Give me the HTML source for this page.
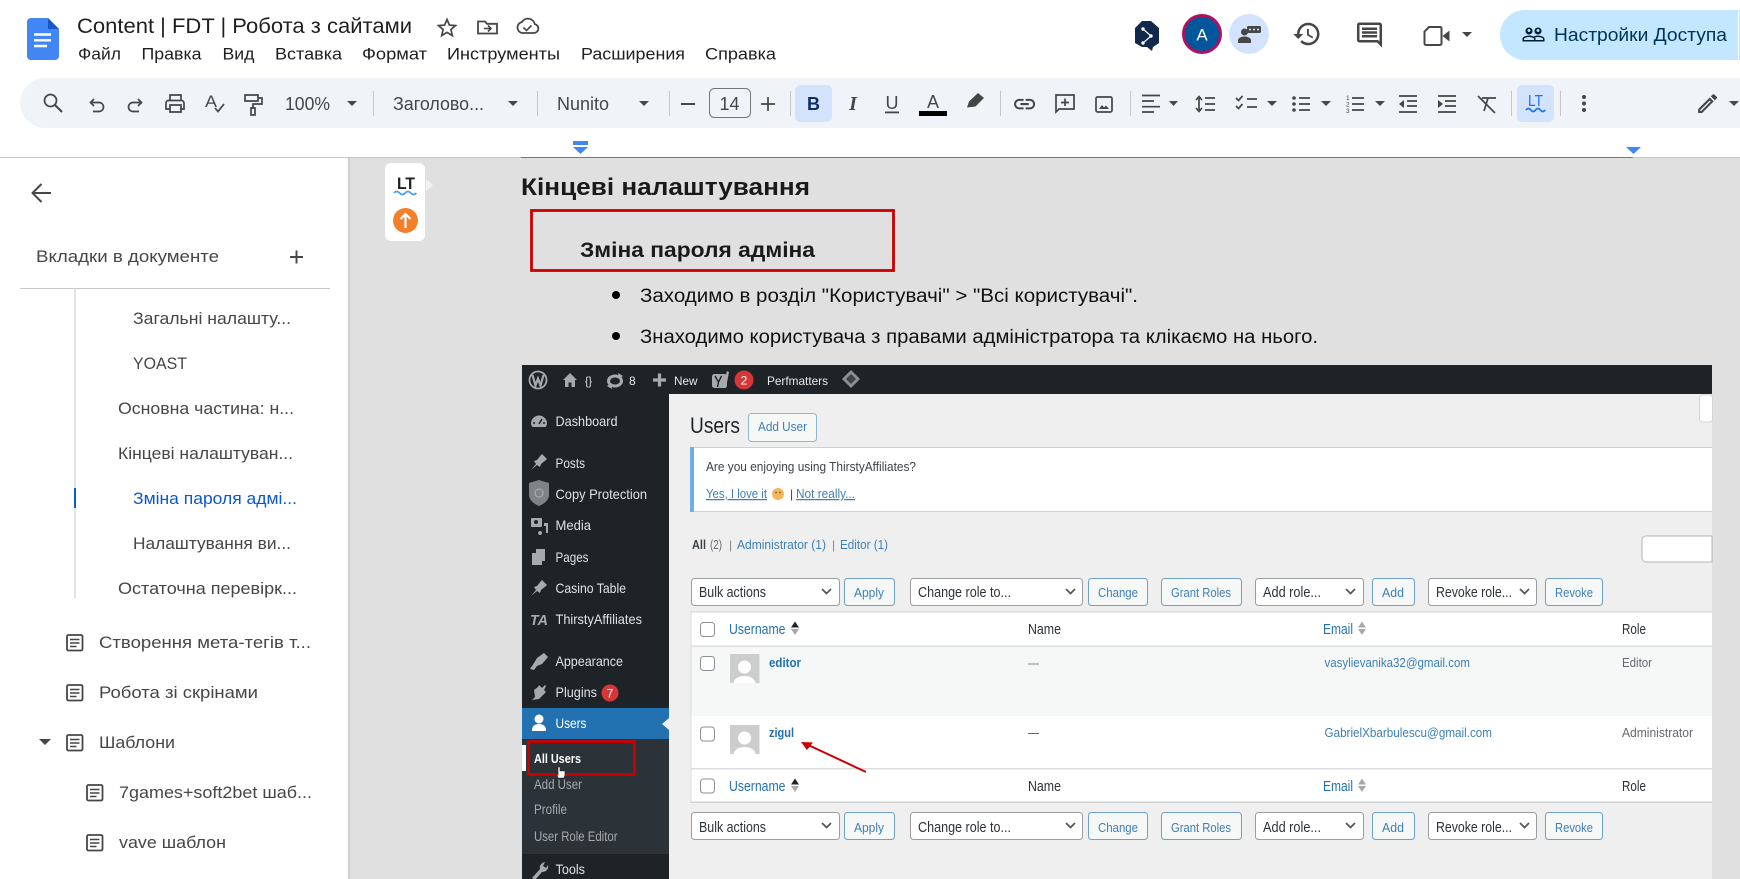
<!DOCTYPE html>
<html><head><meta charset="utf-8"><title>Content | FDT | Робота з сайтами</title>
<style>
html,body{margin:0;padding:0;width:1740px;height:879px;overflow:hidden;background:#fff}
svg{display:block;font-family:"Liberation Sans",sans-serif}
.t{font-size:21.5px;fill:#1f1f1f}
.m{font-size:16.5px;fill:#1f1f1f}
.tb{font-size:18px;fill:#444746}
.s{font-size:16.5px;fill:#444746}
.d{font-size:19px;fill:#111}
.wm{font-size:14px;fill:#dfe1e3}
.ws{font-size:13.5px;fill:#a7aaad}
.wb{font-size:12px;fill:#e6e7e8}
.sel{font-size:14.5px;fill:#2c3338}
.btn{font-size:13px;fill:#3f7fb5}
.th{font-size:14.5px;fill:#2271b1}
.tn{font-size:14.5px;fill:#2c3338}
.td{font-size:13px;fill:#3a7fb8}
.tr{font-size:13px;fill:#646970}
.ic{fill:#444746}
.st{fill:none;stroke:#444746;stroke-width:1.7}
.wi{fill:#a7aaad}
</style></head><body>
<svg xmlns="http://www.w3.org/2000/svg" width="1740" height="879" viewBox="0 0 1740 879">
<rect width="1740" height="879" fill="#fff"/>

<!-- doc area -->
<rect x="349" y="157" width="1391" height="722" fill="#e0e0e0"/>
<rect x="348" y="157" width="2" height="722" fill="#cfcfcf"/>
<rect x="0" y="157" width="1740" height="1" fill="#c7c7c7"/>
<rect x="521" y="157" width="1112" height="1" fill="#777"/>

<!-- header -->
<path d="M27 22a4 4 0 0 1 4-4h17l11 11v27a4 4 0 0 1-4 4H31a4 4 0 0 1-4-4z" fill="#4285f4"/>
<path d="M48 18l11 11H48z" fill="#1a56c4"/>
<path d="M34 34.5h17M34 40.3h17M34 46h13" stroke="#fff" stroke-width="2.4" fill="none"/>
<text class="t" x="77" y="33" textLength="335" lengthAdjust="spacingAndGlyphs">Content | FDT | Робота з сайтами</text>
<path d="M447 19.5l2.4 5.6 6.1.5-4.6 4 1.4 6-5.3-3.2-5.3 3.2 1.4-6-4.6-4 6.1-.5z" fill="none" stroke="#444746" stroke-width="1.7"/>
<path d="M478 21.5h7l2 2.3h10v9.7h-19z" fill="none" stroke="#444746" stroke-width="1.8"/>
<path d="M484 28.5h7M488 25.5l3 3-3 3" fill="none" stroke="#444746" stroke-width="1.6"/>
<path d="M522 33h12a4.5 4.5 0 0 0 .8-8.9A7 7 0 0 0 522 22a5.6 5.6 0 0 0 0 11z" fill="none" stroke="#444746" stroke-width="1.8"/>
<path d="M523.5 27.5l3 3 5-5" fill="none" stroke="#444746" stroke-width="1.6"/>

<text class="m" x="78" y="59.5" textLength="43" lengthAdjust="spacingAndGlyphs">Файл</text>
<text class="m" x="141.5" y="59.5" textLength="60" lengthAdjust="spacingAndGlyphs">Правка</text>
<text class="m" x="222.5" y="59.5" textLength="32" lengthAdjust="spacingAndGlyphs">Вид</text>
<text class="m" x="275" y="59.5" textLength="67" lengthAdjust="spacingAndGlyphs">Вставка</text>
<text class="m" x="362" y="59.5" textLength="65" lengthAdjust="spacingAndGlyphs">Формат</text>
<text class="m" x="447" y="59.5" textLength="113" lengthAdjust="spacingAndGlyphs">Инструменты</text>
<text class="m" x="581" y="59.5" textLength="104" lengthAdjust="spacingAndGlyphs">Расширения</text>
<text class="m" x="705" y="59.5" textLength="71" lengthAdjust="spacingAndGlyphs">Справка</text>

<!-- right header -->
<path d="M1142 21h9l8 7v15l-6 4-1 4-5-4h-5l-7-4V28z" fill="#12294b"/>
<path d="M1143 29l8 7-8 7" fill="none" stroke="#fff" stroke-width="1.2"/>
<circle cx="1143" cy="29" r="1.7" fill="#fff"/><circle cx="1151" cy="36" r="1.7" fill="#fff"/><circle cx="1143" cy="43" r="1.7" fill="#fff"/>
<circle cx="1202" cy="34" r="18.5" fill="#01579b" stroke="#b0115e" stroke-width="3"/>
<text x="1202" y="40.5" text-anchor="middle" font-size="17" fill="#fff">A</text>
<circle cx="1249" cy="34" r="20" fill="#d3e3fd"/>
<circle cx="1244.5" cy="32" r="3.5" fill="#444746"/>
<path d="M1238 43v-2.5c0-2.5 3-4 6.5-4s6.5 1.5 6.5 4V43z" fill="#444746"/>
<rect x="1247" y="26" width="14" height="7" rx="1.5" fill="#444746"/>
<path d="M1249 29.5h2M1253 29.5h2M1257 29.5h2" stroke="#d3e3fd" stroke-width="1.5"/>
<path transform="translate(1292,19) scale(1.25)" class="ic" d="M13 3c-4.97 0-9 4.03-9 9H1l3.89 3.89.07.14L9 12H6c0-3.87 3.13-7 7-7s7 3.13 7 7-3.13 7-7 7c-1.93 0-3.68-.79-4.94-2.06l-1.42 1.42C8.27 19.99 10.51 21 13 21c4.97 0 9-4.03 9-9s-4.03-9-9-9zm-1 5v5l4.28 2.54.72-1.21-3.5-2.08V8H12z"/>
<path transform="translate(1354.5,20) scale(1.25)" class="ic" d="M22 4c0-1.1-.9-2-2-2H4c-1.1 0-2 .9-2 2v12c0 1.1.9 2 2 2h14l4 4V4zm-2 13.17L18.83 16H4V4h16v13.17zM6 12h12v2H6zm0-3h12v2H6zm0-3h12v2H6z"/>
<path d="M1429 27h11a1.500 1.500 0 0 1 1.500 1.500v15a1.500 1.500 0 0 1-1.500 1.500h-14a1.500 1.500 0 0 1-1.500-1.500V31.500z" fill="none" stroke="#444746" stroke-width="2"/>
<path d="M1442.500 36l7-5.500v11z" class="ic"/>
<polygon points="1462,32 1472,32 1467,37" class="ic"/>
<path d="M1525 10h215v50h-215a25 25 0 0 1 0-50z" fill="#c2e7ff"/>
<rect x="1738" y="10" width="1" height="50" fill="#fff"/>
<path transform="translate(1521.5,22.5)" fill="#001d35" d="M16.5 13c-1.2 0-3.07.34-4.5 1-1.43-.67-3.3-1-4.5-1C5.33 13 1 14.08 1 16.25V19h22v-2.75c0-2.17-4.33-3.25-6.5-3.25zm-4 4.5h-10v-1.25c0-.54 2.56-1.75 5-1.75s5 1.21 5 1.75v1.25zm9 0H14v-1.25c0-.46-.2-.86-.52-1.22.88-.3 1.96-.53 3.02-.53 2.44 0 5 1.21 5 1.75v1.25zM7.5 12c1.93 0 3.5-1.57 3.5-3.5S9.43 5 7.5 5 4 6.57 4 8.5 5.57 12 7.5 12zm0-5.5c.83 0 1.5.67 1.5 1.5s-.67 1.5-1.5 1.5S6 8.83 6 8s.67-1.5 1.5-1.5zm9 5.5c1.93 0 3.5-1.57 3.5-3.5S18.43 5 16.5 5 13 6.57 13 8.5s1.57 3.5 3.5 3.5zm0-5.5c.83 0 1.5.67 1.5 1.500s-.67 1.5-1.5 1.5S15 8.83 15 8s.67-1.5 1.5-1.5z"/>
<text x="1554" y="41" font-size="18" fill="#003355" textLength="173" lengthAdjust="spacingAndGlyphs">Настройки Доступа</text>

<!-- toolbar -->
<path d="M45 78h1695v50H45a25 25 0 0 1 0-50z" fill="#f0f4f9"/>
<circle cx="50.500" cy="100.500" r="6" fill="none" stroke="#444746" stroke-width="1.700"/>
<path d="M55 105l7 7" stroke="#444746" stroke-width="2"/>
<path class="st" d="M94 99l-3.500 3.500 3.500 3.500M90.500 102.500h8.500a4.500 4.500 0 0 1 0 9h-6"/>
<path class="st" d="M138 99l3.500 3.500-3.500 3.500M141.500 102.500h-8.500a4.500 4.500 0 0 0 0 9h6"/>
<path class="st" d="M170 100v-5h11v5M170 109h-4v-6a2.500 2.500 0 0 1 2.500-2.500h13a2.500 2.500 0 0 1 2.500 2.500v6h-4M170 105h11v7h-11z"/>
<text x="205" y="107" font-size="17" fill="#444746" textLength="12" lengthAdjust="spacingAndGlyphs">A</text>
<path class="st" d="M215 108l3 3.500 6-7.500" stroke-width="1.500"/>
<path class="st" d="M245 95h13v6h-13zM258 98h4v6h-9v4M251 108h4v7h-4z"/>
<text class="tb" x="285" y="110" textLength="45" lengthAdjust="spacingAndGlyphs">100%</text>
<polygon points="347,101 357,101 352,106" class="ic"/>
<rect x="373" y="91" width="1" height="25" fill="#c7c7c7"/>
<text class="tb" x="393" y="110" textLength="91" lengthAdjust="spacingAndGlyphs">Заголово...</text>
<polygon points="508,101 518,101 513,106" class="ic"/>
<rect x="537" y="91" width="1" height="25" fill="#c7c7c7"/>
<text class="tb" x="557" y="110" textLength="52" lengthAdjust="spacingAndGlyphs">Nunito</text>
<polygon points="639,101 649,101 644,106" class="ic"/>
<rect x="669" y="91" width="1" height="25" fill="#c7c7c7"/>
<rect x="681" y="103" width="14" height="2" class="ic"/>
<rect x="709.5" y="88.5" width="41" height="29" rx="5" fill="none" stroke="#747775"/>
<text class="tb" x="729.5" y="110" text-anchor="middle" font-size="16">14</text>
<path d="M761 104h14M768 97v14" class="st" stroke-width="2"/>
<rect x="790" y="91" width="1" height="25" fill="#c7c7c7"/>
<rect x="795" y="85" width="37" height="37" rx="5" fill="#d3e3fd"/>
<text x="813.5" y="110" text-anchor="middle" font-size="18" font-weight="bold" fill="#0b2d5f">B</text>
<text x="853" y="110" text-anchor="middle" font-size="20" font-weight="bold" font-style="italic" fill="#444746" font-family="Liberation Serif">I</text>
<text x="892" y="109" text-anchor="middle" font-size="18" fill="#444746">U</text>
<rect x="885" y="111.5" width="14" height="1.8" fill="#444746"/>
<text x="933" y="108" text-anchor="middle" font-size="18" fill="#444746">A</text>
<rect x="919" y="111" width="28" height="5" fill="#000"/>
<path d="M967 107.500l2-6 9-8.500 6 5-8.500 8.500z" class="ic"/>
<rect x="1000" y="91" width="1" height="25" fill="#c7c7c7"/>
<path transform="translate(1012,91.5) scale(1.05)" class="ic" d="M3.9 12c0-1.71 1.39-3.1 3.1-3.1h4V7H7c-2.76 0-5 2.24-5 5s2.24 5 5 5h4v-1.9H7c-1.71 0-3.1-1.39-3.1-3.1zM8 13h8v-2H8v2zm9-6h-4v1.9h4c1.71 0 3.1 1.39 3.1 3.1s-1.39 3.1-3.1 3.1h-4V17h4c2.76 0 5-2.24 5-5s-2.24-5-5-5z"/>
<path class="st" d="M1056 95h18v14h-15l-3 3zM1065 98.500v7.500M1061 102.500h8"/>
<rect x="1096" y="97" width="16" height="15" rx="1.5" class="st"/>
<path d="M1099 109l3-4 2 2.500 2-2 3 3.500z" class="ic"/>
<rect x="1130" y="91" width="1" height="25" fill="#c7c7c7"/>
<path class="st" d="M1142 95.500h18M1142 101h12M1142 106.700h18M1142 112h12"/>
<polygon points="1169,101 1178,101 1173.5,106" class="ic"/>
<path class="st" d="M1199 97v14M1196 100l3-3.500 3 3.500M1196 108l3 3.500 3-3.500M1205 98h10M1205 104h10M1205 110h10"/>
<path class="st" d="M1236 98l2.500 2.500 4-4.500M1236 106l2.500 2.500 4-4.500M1247 99h10M1247 107h10"/>
<polygon points="1267,101 1277,101 1272,106" class="ic"/>
<circle cx="1294" cy="98" r="1.8" class="ic"/><circle cx="1294" cy="104" r="1.8" class="ic"/><circle cx="1294" cy="110" r="1.8" class="ic"/>
<path class="st" d="M1299 98h11M1299 104h11M1299 110h11"/>
<polygon points="1321,101 1331,101 1326,106" class="ic"/>
<text x="1346" y="100" font-size="6.5" fill="#444746">1</text><text x="1346" y="106.5" font-size="6.5" fill="#444746">2</text><text x="1346" y="113" font-size="6.5" fill="#444746">3</text>
<path class="st" d="M1352 98h12M1352 104h12M1352 110h12"/>
<polygon points="1375,101 1385,101 1380,106" class="ic"/>
<path class="st" d="M1399 96h18M1407 101h10M1407 106h10M1399 112h18"/>
<polygon points="1404,100 1404,108 1399,104" class="ic"/>
<path class="st" d="M1438 96h18M1445 101h11M1445 106h11M1438 112h18"/>
<polygon points="1438,100 1438,108 1443,104" class="ic"/>
<path class="st" d="M1478 96l17 17M1482 98h14M1488 98l-4 13" stroke-width="2"/>
<rect x="1511" y="91" width="1" height="25" fill="#c7c7c7"/>
<rect x="1517" y="85" width="37" height="37" rx="5" fill="#d3e3fd"/>
<text x="1535.500" y="106" text-anchor="middle" font-size="16" fill="#1a73e8" textLength="15" lengthAdjust="spacingAndGlyphs">LT</text>
<path d="M1526 110q2.400-3 4.800 0t4.800 0 4.800 0 4.800 0" fill="none" stroke="#1a73e8" stroke-width="1.700"/>
<rect x="1560" y="91" width="1" height="25" fill="#c7c7c7"/>
<circle cx="1584" cy="97" r="2" class="ic"/><circle cx="1584" cy="103.5" r="2" class="ic"/><circle cx="1584" cy="110" r="2" class="ic"/>
<path transform="translate(1695,91) scale(1.05)" class="ic" d="M3 17.25V21h3.75L17.81 9.94l-3.75-3.75L3 17.25zM5.92 19H5v-.92l9.06-9.06.92.92L5.92 19zM20.71 5.63l-2.34-2.34c-.39-.39-1.02-.39-1.41 0l-1.83 1.83 3.75 3.75 1.83-1.83c.39-.39.39-1.02 0-1.41z"/>
<polygon points="1729,101 1739,101 1734,106" class="ic"/>

<!-- ruler markers -->
<rect x="573" y="141" width="15" height="4" fill="#4285f4"/>
<polygon points="573,147 588,147 580.5,154" fill="#4285f4"/>
<polygon points="1626,147 1641,147 1633.5,154" fill="#4285f4"/>

<!-- sidebar -->
<path d="M51 193H34M41.5 184l-9 9 9 9" fill="none" stroke="#444746" stroke-width="2"/>
<text class="s" x="36" y="262" textLength="183" lengthAdjust="spacingAndGlyphs">Вкладки в документе</text>
<path d="M290 257h13M296.5 250.5v13" fill="none" stroke="#444746" stroke-width="1.9"/>
<rect x="20" y="288" width="310" height="1" fill="#c7c7c7"/>
<rect x="74" y="289" width="2" height="309" fill="#e3e3e3"/>
<rect x="74" y="488" width="2" height="20" fill="#0b57d0"/>
<text class="s" x="133" y="324" textLength="158" lengthAdjust="spacingAndGlyphs">Загальні налашту...</text>
<text class="s" x="133" y="369" textLength="54" lengthAdjust="spacingAndGlyphs">YOAST</text>
<text class="s" x="118" y="414" textLength="176" lengthAdjust="spacingAndGlyphs">Основна частина: н...</text>
<text class="s" x="118" y="459" textLength="175" lengthAdjust="spacingAndGlyphs">Кінцеві налаштуван...</text>
<text class="s" x="133" y="504" style="fill:#0b57d0" textLength="164" lengthAdjust="spacingAndGlyphs">Зміна пароля адмі...</text>
<text class="s" x="133" y="549" textLength="158" lengthAdjust="spacingAndGlyphs">Налаштування ви...</text>
<text class="s" x="118" y="594" textLength="179" lengthAdjust="spacingAndGlyphs">Остаточна перевірк...</text>
<text class="s" x="99" y="648" textLength="212" lengthAdjust="spacingAndGlyphs">Створення мета-тегів т...</text>
<text class="s" x="99" y="698" textLength="159" lengthAdjust="spacingAndGlyphs">Робота зі скрінами</text>
<text class="s" x="99" y="748" textLength="76" lengthAdjust="spacingAndGlyphs">Шаблони</text>
<text class="s" x="119" y="798" textLength="193" lengthAdjust="spacingAndGlyphs">7games+soft2bet шаб...</text>
<text class="s" x="119" y="848" textLength="107" lengthAdjust="spacingAndGlyphs">vave шаблон</text>
<g fill="none" stroke="#444746" stroke-width="1.8">
<rect x="67" y="635" width="15.5" height="15.5" rx="1.5"/><path d="M70 639.500h9.500M70 643h9.500M70 646.500h6.500" stroke-width="1.5"/>
<rect x="67" y="685" width="15.5" height="15.5" rx="1.5"/><path d="M70 689.500h9.500M70 693h9.500M70 696.500h6.500" stroke-width="1.5"/>
<rect x="67" y="735" width="15.5" height="15.5" rx="1.5"/><path d="M70 739.500h9.500M70 743h9.500M70 746.500h6.500" stroke-width="1.5"/>
<rect x="87" y="785" width="15.5" height="15.5" rx="1.5"/><path d="M90 789.500h9.500M90 793h9.500M90 796.500h6.500" stroke-width="1.5"/>
<rect x="87" y="835" width="15.5" height="15.5" rx="1.5"/><path d="M90 839.500h9.500M90 843h9.500M90 846.500h6.500" stroke-width="1.5"/>
</g>
<polygon points="39,739 51,739 45,745" class="ic"/>

<!-- LT widget -->
<rect x="385" y="163" width="40" height="78" rx="6" fill="#fff"/>
<polygon points="426,179 433,185 426,191" fill="#f2f2f2"/>
<text x="406" y="189" text-anchor="middle" font-size="17" font-weight="bold" fill="#222" textLength="18" lengthAdjust="spacingAndGlyphs">LT</text>
<path d="M394 193q2.800-3 5.600 0t5.600 0 5.600 0 5.600 0" fill="none" stroke="#4a9ff0" stroke-width="1.8"/>
<circle cx="405.5" cy="220.5" r="12.5" fill="#f47f2b"/>
<path d="M405.5 228v-14M400.5 219l5-5 5 5" fill="none" stroke="#fff" stroke-width="2.2"/>

<!-- doc text -->
<text x="521" y="195" font-size="24.5" font-weight="bold" fill="#1a1a1a" textLength="289" lengthAdjust="spacingAndGlyphs">Кінцеві налаштування</text>
<rect x="531.5" y="210.5" width="362" height="60" fill="none" stroke="#cc0000" stroke-width="2.8"/>
<text x="580" y="257" font-size="21.5" font-weight="bold" fill="#1a1a1a" textLength="235" lengthAdjust="spacingAndGlyphs">Зміна пароля адміна</text>
<circle cx="616" cy="295" r="4" fill="#000"/>
<circle cx="616" cy="336" r="4" fill="#000"/>
<text class="d" x="640" y="302" textLength="498" lengthAdjust="spacingAndGlyphs">Заходимо в розділ "Користувачі" &gt; "Всі користувачі".</text>
<text class="d" x="640" y="343" textLength="678" lengthAdjust="spacingAndGlyphs">Знаходимо користувача з правами адміністратора та клікаємо на нього.</text>

<!-- WP screenshot -->
<rect x="522" y="365" width="1190" height="514" fill="#efefef"/>
<rect x="522" y="365" width="1190" height="29" fill="#1d2327"/>
<rect x="522" y="394" width="147" height="485" fill="#1d2327"/>

<!-- admin bar -->
<circle cx="538" cy="380" r="8.5" fill="none" stroke="#a7aaad" stroke-width="1.8"/>
<path d="M532.500 375l3 10.500 2.500-7 2.500 7 3-10.500" fill="none" stroke="#a7aaad" stroke-width="2.2"/>
<path d="M563 380l7-7 7 7-2 0v7h-3.500v-4.500h-3V387H565v-7z" class="wi"/>
<text class="wb" x="585" y="385" textLength="7" lengthAdjust="spacingAndGlyphs">{}</text>
<ellipse cx="615" cy="381" rx="6.500" ry="5" fill="none" stroke="#a7aaad" stroke-width="3"/>
<path d="M618 373l5 3-4 3zM612 389l-5-3 4-3z" class="wi"/>
<text class="wb" x="629" y="385">8</text>
<path d="M653 380h13M659.5 373.5v13" stroke="#a7aaad" stroke-width="3.2"/>
<text class="wb" x="674" y="385" textLength="23.5" lengthAdjust="spacingAndGlyphs">New</text>
<rect x="712" y="374" width="15" height="14" rx="2.500" class="wi"/>
<path d="M722 388l5-17 2 1-3 16z" class="wi"/>
<path d="M715 376l3.500 6 3-6M718.500 382l-1 5" fill="none" stroke="#1d2327" stroke-width="1.400"/>
<circle cx="744" cy="380" r="9.5" fill="#d63638"/>
<text x="744" y="384.5" text-anchor="middle" font-size="12" fill="#fff">2</text>
<text class="wb" x="767" y="385" textLength="61" lengthAdjust="spacingAndGlyphs">Perfmatters</text>
<polygon points="851,370 860,379 851,388 842,379" fill="#8c8f94"/>
<polygon points="851,374 856,379 851,384 846,379" fill="#3c434a"/>

<!-- left menu -->
<text class="wm" x="555.5" y="426" textLength="62" lengthAdjust="spacingAndGlyphs">Dashboard</text>
<text class="wm" x="555.5" y="468" textLength="29.5" lengthAdjust="spacingAndGlyphs">Posts</text>
<text class="wm" x="555.5" y="499" textLength="91.5" lengthAdjust="spacingAndGlyphs">Copy Protection</text>
<text class="wm" x="555.5" y="530" textLength="35.5" lengthAdjust="spacingAndGlyphs">Media</text>
<text class="wm" x="555.5" y="562" textLength="33" lengthAdjust="spacingAndGlyphs">Pages</text>
<text class="wm" x="555.5" y="593" textLength="70.5" lengthAdjust="spacingAndGlyphs">Casino Table</text>
<text class="wm" x="555.5" y="624" textLength="86.5" lengthAdjust="spacingAndGlyphs">ThirstyAffiliates</text>
<text class="wm" x="555.5" y="666" textLength="67.5" lengthAdjust="spacingAndGlyphs">Appearance</text>
<text class="wm" x="555.5" y="697" textLength="41.5" lengthAdjust="spacingAndGlyphs">Plugins</text>
<circle cx="610" cy="693" r="8.5" fill="#d63638"/>
<text x="610" y="697.5" text-anchor="middle" font-size="12" fill="#fff">7</text>
<!-- menu icons -->
<path d="M531 423.500a8 8 0 0 1 16 0q0 2-1.500 3.500h-13q-1.500-1.500-1.500-3.500z" class="wi"/>
<path d="M539 424l3-5" stroke="#1d2327" stroke-width="1.500"/><circle cx="534" cy="423" r="1" fill="#1d2327"/><circle cx="544" cy="423" r="1" fill="#1d2327"/>
<path d="M531 470l5-6-2-3 3-1 4-5 1-1 5 5-1 1-5 4-1 3-3-2z" class="wi"/>
<path d="M539 480l10 3v12c0 5-5 9-10 11-5-2-10-6-10-11v-12z" fill="#7f8286"/>
<circle cx="539" cy="493" r="4" fill="none" stroke="#a7aaad" stroke-width="1.3"/>
<rect x="531" y="518" width="11" height="9" rx="1" class="wi"/><circle cx="536" cy="522" r="2" fill="#1d2327"/>
<path d="M544 523h4v10h-2v-7h-2zM540 531a2 2 0 1 0 .1 0" class="wi"/>
<path d="M536 549h9v12h-3v4h-10v-12h4z" class="wi"/>
<path d="M531 596l5-6-2-3 3-1 4-5 1-1 5 5-1 1-5 4-1 3-3-2z" class="wi"/>
<text x="530" y="625" font-size="15" font-weight="bold" font-style="italic" fill="#a7aaad" textLength="18" lengthAdjust="spacingAndGlyphs">TA</text>
<path d="M530 669l4-6 3-5 7-5 4 4-6 7-5 2-3 4z" class="wi"/>
<path d="M532 700l3-3-1-7 4-3 1-2 3 3 3-3 1 1-2 4 2 2-3 3-4 4z" class="wi"/>
<!-- users -->
<rect x="522" y="708" width="147" height="31" fill="#2271b1"/>
<polygon points="669,718 662,724 669,730" fill="#efefef"/>
<circle cx="539" cy="719" r="4.5" fill="#fff"/>
<path d="M532 730c0-4 3-6 7-6s7 2 7 6v1h-14z" fill="#fff"/>
<text x="555.5" y="728" font-size="14" fill="#fff" textLength="31" lengthAdjust="spacingAndGlyphs">Users</text>
<rect x="522" y="739" width="147" height="115" fill="#2c3338"/>
<rect x="522" y="745" width="4" height="26" fill="#fff"/>
<text x="534" y="763" font-size="13" font-weight="bold" fill="#fff" textLength="47" lengthAdjust="spacingAndGlyphs">All Users</text>
<text class="ws" x="534" y="789" textLength="48" lengthAdjust="spacingAndGlyphs">Add User</text>
<text class="ws" x="534" y="814" textLength="33" lengthAdjust="spacingAndGlyphs">Profile</text>
<text class="ws" x="534" y="841" textLength="83.5" lengthAdjust="spacingAndGlyphs">User Role Editor</text>
<rect x="528.5" y="741.5" width="106" height="33" fill="none" stroke="#cc0000" stroke-width="2.8"/>
<path d="M558 767v8h-1l1 3h6l1-3v-4h-5v-4z" fill="#fff" stroke="#222" stroke-width=".6"/>
<text class="wm" x="555.5" y="874" textLength="29.5" lengthAdjust="spacingAndGlyphs">Tools</text>
<path d="M532 878l8-9c-1-3 1-6 5-7l-2 4 3 2 2-3c1 4-2 7-6 7l-7 8z" class="wi"/>

<!-- content -->
<text x="690" y="433" font-size="22" fill="#1d2327" textLength="50" lengthAdjust="spacingAndGlyphs">Users</text>
<rect x="748.5" y="413.5" width="68" height="28" rx="3" fill="#f6f7f7" stroke="#8fb4d6"/>
<text class="btn" x="758" y="431" textLength="49" lengthAdjust="spacingAndGlyphs">Add User</text>
<rect x="1699.5" y="395" width="13" height="27" rx="3" fill="#fff" stroke="#d4d4d4"/>
<rect x="690" y="447" width="1022" height="65" fill="#fff"/>
<rect x="690" y="447" width="1022" height="1" fill="#d0d0d0"/>
<rect x="690" y="511" width="1022" height="1" fill="#d0d0d0"/>
<rect x="690" y="447" width="4" height="65" fill="#72aee6"/>
<text x="706" y="471" font-size="12.5" fill="#3c434a" textLength="210" lengthAdjust="spacingAndGlyphs">Are you enjoying using ThirstyAffiliates?</text>
<text x="706" y="498" font-size="12.5" fill="#3f7fb5" text-decoration="underline" textLength="61" lengthAdjust="spacingAndGlyphs">Yes, I love it</text>
<circle cx="778" cy="494" r="6" fill="#f5b65c"/>
<circle cx="776" cy="492.500" r=".9" fill="#654"/><circle cx="780" cy="492.500" r=".9" fill="#654"/>
<text x="790" y="498" font-size="12" fill="#3c434a">|</text>
<text x="796" y="498" font-size="12.5" fill="#3f7fb5" text-decoration="underline" textLength="59" lengthAdjust="spacingAndGlyphs">Not really...</text>
<text x="692" y="549" font-size="12.5" font-weight="bold" fill="#3c434a" textLength="14" lengthAdjust="spacingAndGlyphs">All</text>
<text x="710" y="549" font-size="12.5" fill="#646970" textLength="12" lengthAdjust="spacingAndGlyphs">(2)</text>
<text x="729" y="549" font-size="12" fill="#888">|</text>
<text x="737" y="549" font-size="12.5" fill="#3f7fb5" textLength="89" lengthAdjust="spacingAndGlyphs">Administrator (1)</text>
<text x="832" y="549" font-size="12" fill="#888">|</text>
<text x="840" y="549" font-size="12.5" fill="#3f7fb5" textLength="48" lengthAdjust="spacingAndGlyphs">Editor (1)</text>
<path d="M1712 536h-66a4 4 0 0 0-4 4v18a4 4 0 0 0 4 4h66z" fill="#fff" stroke="#b4b4b4"/>

<!-- top action row -->
<g fill="#fff" stroke="#9a9da1">
<rect x="691.5" y="578.5" width="148" height="27" rx="3"/>
<rect x="910.5" y="578.5" width="172" height="27" rx="3"/>
<rect x="1255.5" y="578.5" width="108" height="27" rx="3"/>
<rect x="1428.5" y="578.5" width="108" height="27" rx="3"/>
<rect x="691.5" y="812.5" width="148" height="27" rx="3"/>
<rect x="910.5" y="812.5" width="172" height="27" rx="3"/>
<rect x="1255.5" y="812.5" width="108" height="27" rx="3"/>
<rect x="1428.5" y="812.5" width="108" height="27" rx="3"/>
</g>
<g fill="#f6f7f7" stroke="#6ea0cb">
<rect x="844.5" y="578.5" width="50" height="27" rx="3"/>
<rect x="1088.5" y="578.5" width="59" height="27" rx="3"/>
<rect x="1161.5" y="578.5" width="80" height="27" rx="3"/>
<rect x="1372.5" y="578.5" width="42" height="27" rx="3"/>
<rect x="1545.5" y="578.5" width="57" height="27" rx="3"/>
<rect x="844.5" y="812.5" width="50" height="27" rx="3"/>
<rect x="1088.5" y="812.5" width="59" height="27" rx="3"/>
<rect x="1161.5" y="812.5" width="80" height="27" rx="3"/>
<rect x="1372.5" y="812.5" width="42" height="27" rx="3"/>
<rect x="1545.5" y="812.5" width="57" height="27" rx="3"/>
</g>
<g fill="none" stroke="#50575e" stroke-width="1.7">
<path d="M822 589l4.500 4.500 4.500-4.500M1066 589l4.500 4.500 4.500-4.500M1346 589l4.500 4.500 4.500-4.500M1520 589l4.500 4.500 4.500-4.500"/>
<path d="M822 823l4.500 4.500 4.500-4.500M1066 823l4.500 4.500 4.500-4.500M1346 823l4.500 4.500 4.500-4.500M1520 823l4.500 4.500 4.500-4.500"/>
</g>
<text class="sel" x="699" y="597" textLength="67" lengthAdjust="spacingAndGlyphs">Bulk actions</text>
<text class="btn" x="854" y="597" textLength="30" lengthAdjust="spacingAndGlyphs">Apply</text>
<text class="sel" x="918" y="597" textLength="93" lengthAdjust="spacingAndGlyphs">Change role to...</text>
<text class="btn" x="1098" y="597" textLength="40" lengthAdjust="spacingAndGlyphs">Change</text>
<text class="btn" x="1171" y="597" textLength="60" lengthAdjust="spacingAndGlyphs">Grant Roles</text>
<text class="sel" x="1263" y="597" textLength="58" lengthAdjust="spacingAndGlyphs">Add role...</text>
<text class="btn" x="1382" y="597" textLength="22" lengthAdjust="spacingAndGlyphs">Add</text>
<text class="sel" x="1436" y="597" textLength="76" lengthAdjust="spacingAndGlyphs">Revoke role...</text>
<text class="btn" x="1555" y="597" textLength="38" lengthAdjust="spacingAndGlyphs">Revoke</text>
<text class="sel" x="699" y="832" textLength="67" lengthAdjust="spacingAndGlyphs">Bulk actions</text>
<text class="btn" x="854" y="832" textLength="30" lengthAdjust="spacingAndGlyphs">Apply</text>
<text class="sel" x="918" y="832" textLength="93" lengthAdjust="spacingAndGlyphs">Change role to...</text>
<text class="btn" x="1098" y="832" textLength="40" lengthAdjust="spacingAndGlyphs">Change</text>
<text class="btn" x="1171" y="832" textLength="60" lengthAdjust="spacingAndGlyphs">Grant Roles</text>
<text class="sel" x="1263" y="832" textLength="58" lengthAdjust="spacingAndGlyphs">Add role...</text>
<text class="btn" x="1382" y="832" textLength="22" lengthAdjust="spacingAndGlyphs">Add</text>
<text class="sel" x="1436" y="832" textLength="76" lengthAdjust="spacingAndGlyphs">Revoke role...</text>
<text class="btn" x="1555" y="832" textLength="38" lengthAdjust="spacingAndGlyphs">Revoke</text>

<!-- table -->
<rect x="691" y="612" width="1021" height="190" fill="#fff"/>
<rect x="691" y="647" width="1021" height="69" fill="#f6f7f7"/>
<rect x="691" y="611" width="1021" height="1.5" fill="#dcdcde"/>
<rect x="691" y="645.5" width="1021" height="1.5" fill="#dcdcde"/>
<rect x="691" y="768" width="1021" height="1.5" fill="#dcdcde"/>
<rect x="691" y="801.5" width="1021" height="1.5" fill="#d0d0d0"/>
<rect x="690.5" y="611" width="1" height="192" fill="#dcdcde"/>
<g fill="#fff" stroke="#8c8f94">
<rect x="700.5" y="622.5" width="14" height="14" rx="3"/>
<rect x="700.5" y="656.5" width="14" height="14" rx="3"/>
<rect x="700.5" y="727" width="14" height="14" rx="3"/>
<rect x="700.5" y="779" width="14" height="14" rx="3"/>
</g>
<text class="th" x="729" y="634" textLength="56.5" lengthAdjust="spacingAndGlyphs">Username</text>
<text class="th" x="729" y="791" textLength="56.5" lengthAdjust="spacingAndGlyphs">Username</text>
<polygon points="791,627.5 799,627.5 795,621.5" fill="#1d2327"/><polygon points="791,629 799,629 795,635" fill="#a7aaad"/>
<polygon points="791,784.5 799,784.5 795,778.5" fill="#1d2327"/><polygon points="791,786 799,786 795,792" fill="#a7aaad"/>
<text class="tn" x="1028" y="634" textLength="33" lengthAdjust="spacingAndGlyphs">Name</text>
<text class="tn" x="1028" y="791" textLength="33" lengthAdjust="spacingAndGlyphs">Name</text>
<text class="th" x="1323" y="634" textLength="30" lengthAdjust="spacingAndGlyphs">Email</text>
<text class="th" x="1323" y="791" textLength="30" lengthAdjust="spacingAndGlyphs">Email</text>
<polygon points="1358,627.5 1366,627.5 1362,621.5" fill="#a7aaad"/><polygon points="1358,629 1366,629 1362,635" fill="#a7aaad"/>
<polygon points="1358,784.5 1366,784.5 1362,778.5" fill="#a7aaad"/><polygon points="1358,786 1366,786 1362,792" fill="#a7aaad"/>
<text class="tn" x="1622" y="634" textLength="24" lengthAdjust="spacingAndGlyphs">Role</text>
<text class="tn" x="1622" y="791" textLength="24" lengthAdjust="spacingAndGlyphs">Role</text>
<!-- avatars -->
<rect x="730" y="654" width="29.5" height="29" fill="#cdcdcd"/>
<circle cx="744.5" cy="667" r="6.500" fill="#fff"/><path d="M733.5 683c1-5 6-7 11-7s10 2 11 7z" fill="#fff"/>
<rect x="730" y="725" width="29.5" height="29" fill="#cdcdcd"/>
<circle cx="744.5" cy="738" r="6.500" fill="#fff"/><path d="M733.5 754c1-5 6-7 11-7s10 2 11 7z" fill="#fff"/>
<text x="769" y="667" font-size="12.5" font-weight="bold" fill="#2271b1" textLength="32" lengthAdjust="spacingAndGlyphs">editor</text>
<text x="769" y="737" font-size="12.5" font-weight="bold" fill="#2271b1" textLength="25" lengthAdjust="spacingAndGlyphs">zigul</text>
<rect x="1028" y="663.5" width="11" height="1" fill="#888"/>
<rect x="1028" y="733" width="11" height="1" fill="#666"/>
<text class="td" x="1324.5" y="667" textLength="145.5" lengthAdjust="spacingAndGlyphs">vasylievanika32@gmail.com</text>
<text class="td" x="1324.5" y="737" textLength="167.5" lengthAdjust="spacingAndGlyphs">GabrielXbarbulescu@gmail.com</text>
<text class="tr" x="1622" y="667" textLength="30" lengthAdjust="spacingAndGlyphs">Editor</text>
<text class="tr" x="1622" y="737" textLength="71" lengthAdjust="spacingAndGlyphs">Administrator</text>
<!-- arrow -->
<path d="M866 772L804 743" stroke="#cc0000" stroke-width="2" fill="none"/>
<polygon points="801,742 813,742.5 807,750" fill="#cc0000"/>
</svg>
</body></html>
